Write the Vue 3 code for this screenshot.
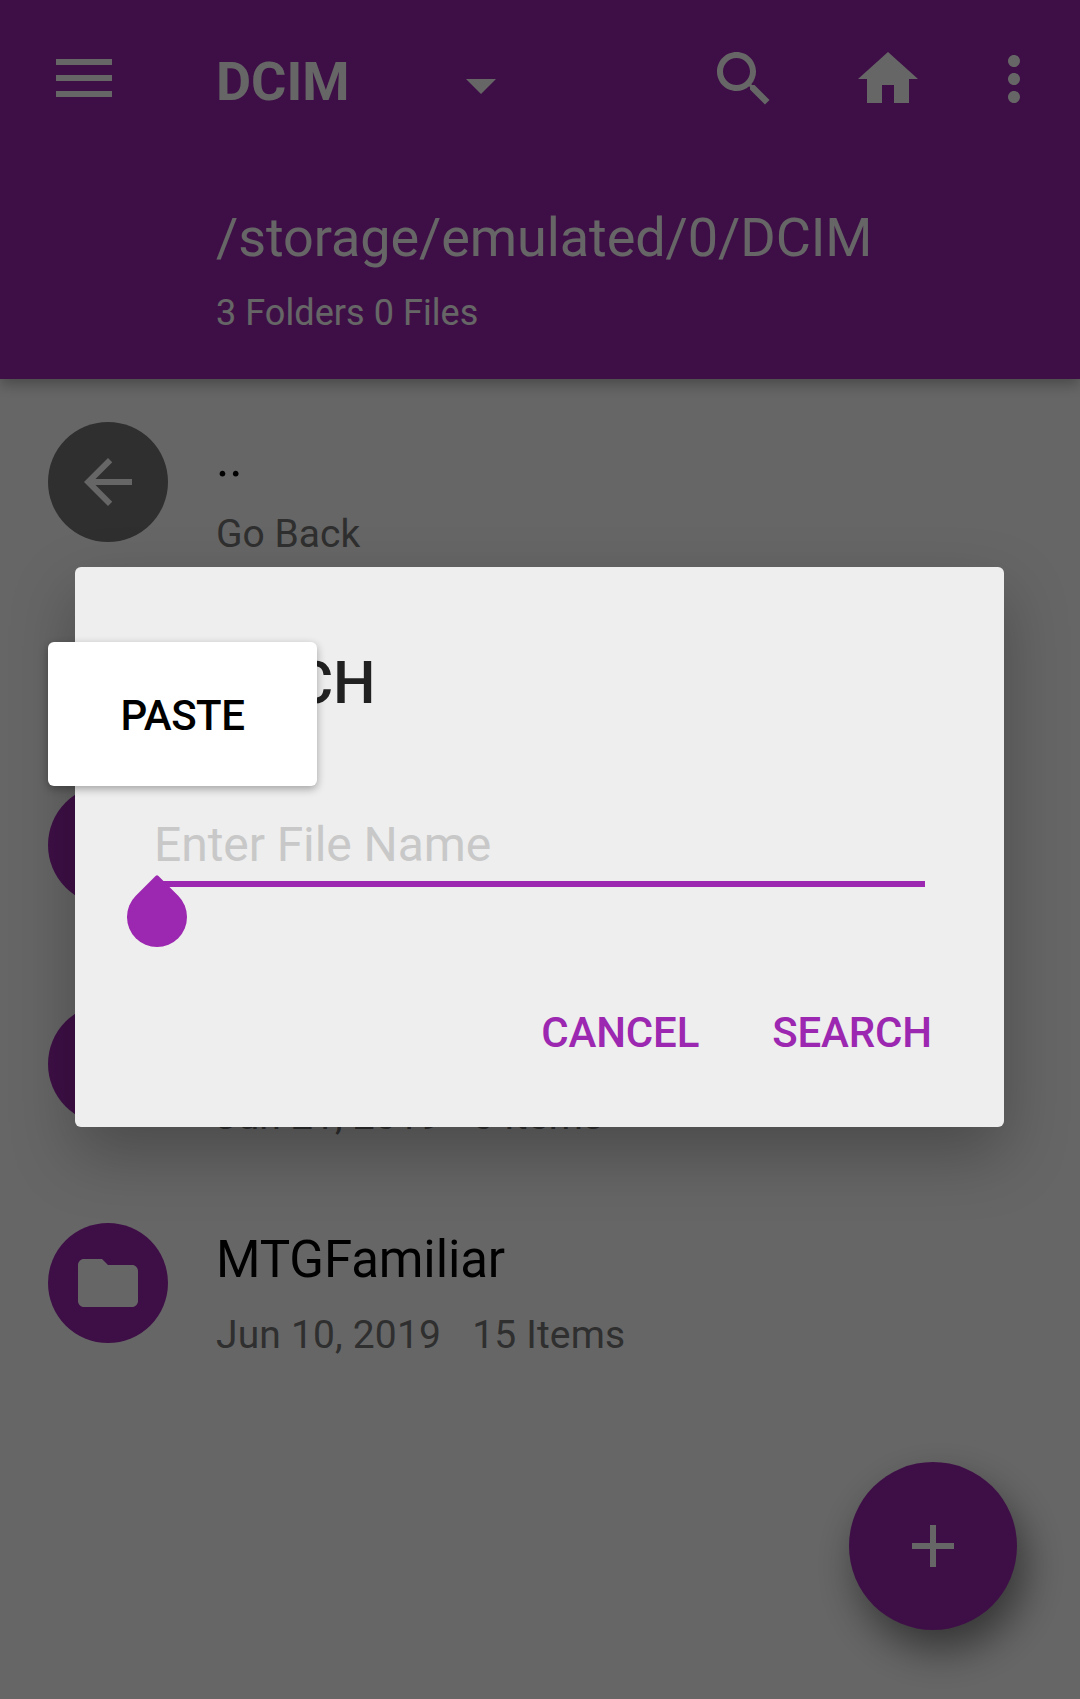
<script setup>
const rows = [
  { icon: 'back', title: '..', meta: ['Go Back'] },
  { icon: 'folder', title: '', meta: [], section: true },
  { icon: 'folder', title: '', meta: ['Jun 21, 2019', '0 Items'] },
  { icon: 'folder', title: 'MTGFamiliar', meta: ['Jun 10, 2019', '15 Items'] },
]
const paths = {
  back: 'M20 11H7.83l5.59-5.59L12 4l-8 8 8 8 1.41-1.41L7.83 13H20v-2z',
  folder: 'M10 4H4c-1.1 0-1.99.9-1.99 2L2 18c0 1.1.9 2 2 2h16c1.1 0 2-.9 2-2V8c0-1.1-.9-2-2-2h-8l-2-2z',
}
</script>

<template>
  <div class="screen">
    <header class="appbar">
      <div class="toolbar">
        <svg class="menu" viewBox="0 0 56 38"><path d="M0 0h56v6H0zM0 16h56v6H0zM0 32h56v6H0z" /></svg>
        <h1 class="title">DCIM</h1>
        <svg class="caret" viewBox="0 0 30 15"><path d="M0 0h30L15 15z" /></svg>
        <div class="actions">
          <svg viewBox="0 0 24 24"><path d="M15.5 14h-.79l-.28-.27C15.41 12.59 16 11.11 16 9.5 16 5.91 13.09 3 9.5 3S3 5.91 3 9.5 5.91 16 9.5 16c1.61 0 3.09-.59 4.23-1.57l.27.28v.79l5 4.99L20.49 19l-4.99-5zm-6 0C7.01 14 5 11.99 5 9.5S7.01 5 9.5 5 14 7.01 14 9.5 11.99 14 9.5 14z" /></svg>
          <svg viewBox="0 0 24 24"><path d="M10 20v-6h4v6h5v-8h3L12 3 2 12h3v8z" /></svg>
          <svg viewBox="0 0 24 24"><path d="M12 8c1.1 0 2-.9 2-2s-.9-2-2-2-2 .9-2 2 .9 2 2 2zm0 2c-1.1 0-2 .9-2 2s.9 2 2 2 2-.9 2-2-.9-2-2-2zm0 6c-1.1 0-2 .9-2 2s.9 2 2 2 2-.9 2-2-.9-2-2-2z" /></svg>
        </div>
      </div>
      <div class="path">/storage/emulated/0/DCIM</div>
      <div class="counts">3 Folders 0 Files</div>
    </header>

    <main class="list">
      <div v-for="(row, i) in rows" :key="i" class="row" :class="{ section: row.section }">
        <div class="avatar" :class="row.icon">
          <svg viewBox="0 0 24 24"><path :d="paths[row.icon]" /></svg>
        </div>
        <div class="text">
          <div class="name">{{ row.title }}</div>
          <div class="meta" :class="row.icon"><span v-for="m in row.meta" :key="m">{{ m }}</span></div>
        </div>
      </div>
    </main>

    <button class="fab"><svg viewBox="0 0 42 42"><path d="M18 0h6v18h18v6H24v18h-6V24H0v-6h18z" /></svg></button>

    <div class="scrim"></div>

    <section class="dialog">
      <h2>SEARCH</h2>
      <div class="field">
        <span>Enter File Name</span>
        <i class="handle"></i>
      </div>
      <div class="buttons">
        <button>CANCEL</button>
        <button>SEARCH</button>
      </div>
    </section>

    <div class="popup">PASTE</div>
  </div>
</template>

<style>
body { margin: 0; }
</style>

<style scoped>
.screen {
  position: relative;
  width: 1080px;
  height: 1699px;
  overflow: hidden;
  background: #fff;
  font-family: Roboto, sans-serif;
  color: #000;
}
svg { display: block; fill: currentColor; flex: none; }
h1, h2 { margin: 0; }
button { border: 0; padding: 0; background: none; font: inherit; color: inherit; letter-spacing: inherit; }

.appbar {
  position: relative;
  box-sizing: border-box;
  height: 379px;
  background: #9c27b0;
  color: #fff;
  box-shadow: 0 5px 14px rgba(0, 0, 0, .3);
}
.toolbar { display: flex; align-items: center; height: 158px; padding: 0 30px 0 56px; }
.menu { width: 56px; height: 38px; margin-top: -2px; }
.title { width: 248px; margin-left: 104px; font-size: 54px; line-height: 64px; font-weight: 700; padding-top: 6px; }
.caret { width: 30px; height: 15px; margin: 15px 0 0 2px; }
.actions { display: flex; margin-left: auto; }
.actions svg { width: 72px; height: 72px; }
.actions svg:nth-child(2) { margin: 0 54px 0 72px; }
.path { margin-left: 216px; padding-top: 48px; font-size: 54px; line-height: 64px; white-space: nowrap; letter-spacing: -.08px; }
.counts { margin-left: 216px; padding-top: 22px; font-size: 36px; line-height: 42px; letter-spacing: .06px; }

.list { padding-top: 43px; }
.row { display: flex; height: 219px; padding-left: 48px; }
.row.section { margin-top: 144px; }
.avatar { display: grid; place-items: center; width: 120px; height: 120px; border-radius: 50%; background: #9c27b0; color: #fff; }
.avatar.back { background: #757575; }
.avatar svg { width: 72px; height: 72px; }
.text { margin-left: 48px; padding-top: 7px; white-space: nowrap; }
.name { height: 66px; font-size: 51px; line-height: 60px; letter-spacing: -.12px; }
.meta { display: flex; gap: 31px; padding-top: 16px; font-size: 39px; line-height: 46px; height: 46px; color: #757575; }
.meta.folder { letter-spacing: .17px; }

.fab {
  position: absolute;
  right: 63px;
  bottom: 69px;
  display: grid;
  place-items: center;
  width: 168px;
  height: 168px;
  border-radius: 50%;
  background: #9c27b0;
  color: #fff;
  box-shadow: 8px 20px 40px rgba(0, 0, 0, .48);
}
.fab svg { width: 42px; height: 42px; }
.scrim { position: absolute; inset: 0; background: rgba(0, 0, 0, .6); }

.dialog {
  position: absolute;
  left: 75px;
  top: 567px;
  box-sizing: border-box;
  width: 929px;
  height: 560px;
  padding: 81px 72px 0;
  border-radius: 6px;
  background: #eee;
  box-shadow: 0 27px 64px rgba(0, 0, 0, .27);
}
h2 { font-size: 60px; line-height: 70px; font-weight: 500; color: #212121; letter-spacing: -.2px; }
.field {
  position: relative;
  box-sizing: border-box;
  margin: 91px 7px 0 8px;
  height: 78px;
  padding-top: 8px;
  border-bottom: 6px solid #9c27b0;
  font-size: 48px;
  line-height: 56px;
  letter-spacing: -.08px;
  color: #c8c8c8;
}
.field span { margin-left: -1px; }
.handle {
  position: absolute;
  left: -28px;
  top: 78px;
  width: 60px;
  height: 60px;
  border-radius: 2px 50% 50% 50%;
  background: #9c27b0;
  transform: rotate(45deg);
}
.buttons { display: flex; justify-content: flex-end; gap: 73px; margin-top: 122px; font-size: 42px; line-height: 48px; font-weight: 500; letter-spacing: -.15px; color: #9c27b0; }

.popup {
  position: absolute;
  left: 48px;
  top: 642px;
  display: grid;
  place-items: center;
  box-sizing: border-box;
  width: 269px;
  height: 144px;
  padding-top: 2px;
  border-radius: 6px;
  background: #fff;
  font-size: 42px;
  font-weight: 500;
  letter-spacing: -.5px;
  box-shadow: 0 3px 9px rgba(0, 0, 0, .32);
}
</style>
